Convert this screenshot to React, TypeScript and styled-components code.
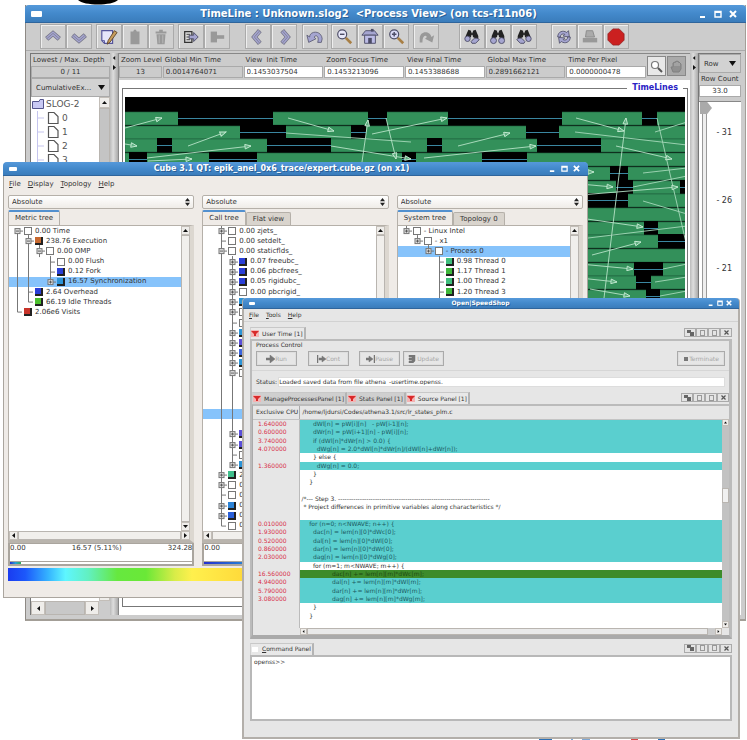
import React from "react";
import styled, { createGlobalStyle } from "styled-components";

const GlobalStyle = createGlobalStyle`
  * { box-sizing: border-box; }
  body { margin: 0; background: #fff; color: #333; font-family: "DejaVu Sans", sans-serif; }
  button, input, select, textarea { font: inherit; color: inherit; margin: 0; padding: 0; border: 0; border-radius: 0; background: none; }
`;

/* ---------- desktop and window frame ---------- */

const Desktop = styled.main`
  position: relative;
  height: 100vh;
  overflow: hidden;
`;

const TopMark = styled.svg`
  position: absolute;
  top: 0;
  left: 76px;
`;

const BottomMark = styled.svg`
  position: absolute;
  bottom: 0;
  left: 539px;
`;

const WindowFrame = styled.section<{ $left: number; $right: number; $top: number; $face: string }>`
  position: absolute;
  left: ${(p) => p.$left}px;
  right: ${(p) => p.$right}px;
  top: ${(p) => p.$top}px;
  display: flex;
  flex-direction: column;
  background: ${(p) => p.$face};
`;

const TimelineFrame = styled(WindowFrame)`
  min-height: 616px;
  border-right: 1px solid #a39e97;
  border-bottom: 2px solid #a39e97;
  border-left: 1px solid #8d8984;
`;

const CubeFrame = styled(WindowFrame)`
  min-height: 436px;
  border: 1px solid #aaa59e;
  border-top: 0;
  border-radius: 5px 5px 0 0;
`;

const ShopFrame = styled(WindowFrame)`
  min-height: 441px;
  border: 2px solid #b3afaa;
  border-top: 0;
  border-radius: 4px 4px 0 0;
`;

const TitleBar = styled.header<{ $height: number; $font: number }>`
  display: flex;
  align-items: center;
  flex: none;
  height: ${(p) => p.$height}px;
  margin: 0 -1px;
  padding: 0 6px;
  border-radius: 4px 4px 0 0;
  background: linear-gradient(#5599da, #4389cb 50%, #3a7cbb);
  border-bottom: 1px solid #2f659c;
  color: #fff;
  font-size: ${(p) => p.$font}px;
  line-height: 12px;
`;

const WindowTitle = styled.h1`
  flex: 1;
  margin: 0;
  font-size: inherit;
  font-weight: bold;
  text-align: center;
  white-space: pre;
  text-shadow: 1px 1px 0 #2a5f96;
`;

const WindowButton = styled.button<{ $width: number }>`
  display: grid;
  place-items: center;
  width: ${(p) => p.$width}px;
  height: 10px;
`;

const MenuDot = styled.button<{ $width: number }>`
  width: ${(p) => p.$width}px;
  height: ${(p) => Math.round(p.$width / 2)}px;
  border-radius: 1px;
  background: #fff;
`;

function Title({ text, height, font, step, dot }: { text: string; height: number; font: number; step: number; dot: number }) {
  const s = step > 12 ? 8 : step > 10 ? 7 : 6;
  return (
    <TitleBar $height={height} $font={font}>
      <MenuDot $width={dot} aria-label="Window menu" />
      <WindowTitle>{text}</WindowTitle>
      <WindowButton $width={step} aria-label="Minimize">
        <svg width={s} height={s} viewBox="0 0 8 8"><path d="M1 7H6" stroke="#fff" strokeWidth="2" /></svg>
      </WindowButton>
      <WindowButton $width={step} aria-label="Maximize">
        <svg width={s} height={s} viewBox="0 0 8 8"><path d="M1 1.5H7V7H1ZM1 2.4H7" fill="none" stroke="#fff" strokeWidth="1.4" /></svg>
      </WindowButton>
      <WindowButton $width={step} aria-label="Close">
        <svg width={s} height={s} viewBox="0 0 8 8"><path d="M1 1L7 7M7 1L1 7" stroke="#fff" strokeWidth="2" /></svg>
      </WindowButton>
    </TitleBar>
  );
}

const MenuBar = styled.nav<{ $font: number; $height: number; $gap: number }>`
  display: flex;
  flex: none;
  align-items: center;
  gap: ${(p) => p.$gap}px;
  height: ${(p) => p.$height}px;
  padding: 0 5px;
  font-size: ${(p) => p.$font}px;
  line-height: 10px;
`;

function Menu({ items, font, height, gap }: { items: string[]; font: number; height: number; gap: number }) {
  return (
    <MenuBar $font={font} $height={height} $gap={gap}>
      {items.map((m) => (
        <button key={m}><u>{m[0]}</u>{m.slice(1)}</button>
      ))}
    </MenuBar>
  );
}

/* ---------- scroll bars and drop-downs ---------- */

const ScrollTrack = styled.div<{ $vertical?: boolean; $size: number; $track: string }>`
  display: flex;
  flex: none;
  flex-direction: ${(p) => (p.$vertical ? "column" : "row")};
  ${(p) => (p.$vertical ? "width" : "height")}: ${(p) => p.$size}px;
  background: ${(p) => p.$track};
`;

const ScrollArrow = styled.button<{ $size: number }>`
  display: grid;
  place-items: center;
  flex: none;
  width: ${(p) => p.$size}px;
  height: ${(p) => p.$size}px;
  background: #efedea;
  border: 1px solid #c3beb8;
`;

const ScrollThumb = styled.div<{ $grow: number; $face: string }>`
  flex: ${(p) => p.$grow} 1 0;
  background: ${(p) => p.$face};
  border: 1px solid #b9b5b0;
`;

const ScrollSpace = styled.div<{ $grow: number }>`
  flex: ${(p) => p.$grow} 1 0;
`;

const arrowPaths = { up: "M0 4L2.5 1L5 4Z", down: "M0 1L2.5 4L5 1Z", left: "M4 0L1 2.5L4 5Z", right: "M1 0L4 2.5L1 5Z" };

function Arrow({ dir, size = 5 }: { dir: keyof typeof arrowPaths; size?: number }) {
  return <svg width={size} height={size} viewBox="0 0 5 5"><path d={arrowPaths[dir]} fill="#111" /></svg>;
}

function Scroll({ vertical, size, track = "#d6d1ca", face = "#f1efec", from = 0, grow = 1, to = 0 }: {
  vertical?: boolean; size: number; track?: string; face?: string; from?: number; grow?: number; to?: number;
}) {
  return (
    <ScrollTrack $vertical={vertical} $size={size} $track={track}>
      <ScrollArrow $size={size} aria-label="Scroll back"><Arrow dir={vertical ? "up" : "left"} size={size > 8 ? 5 : 3} /></ScrollArrow>
      <ScrollSpace $grow={from} />
      <ScrollThumb $grow={grow} $face={face} />
      <ScrollSpace $grow={to} />
      <ScrollArrow $size={size} aria-label="Scroll forward"><Arrow dir={vertical ? "down" : "right"} size={size > 8 ? 5 : 3} /></ScrollArrow>
    </ScrollTrack>
  );
}

const Select = styled.select`
  flex: 1;
  min-width: 0;
  appearance: none;
  line-height: 10px;
  outline: 0;
`;

const DropBox = styled.div`
  display: flex;
  flex: none;
  align-items: center;
  height: 19px;
  padding: 0 4px;
  border: 1px solid #aaa;
  background: #d2d2d2;
`;

const ComboBox = styled.div`
  display: flex;
  align-items: center;
  height: 14px;
  padding: 0 3px;
  border: 1px solid #b5b0a9;
  border-radius: 2px;
  background: linear-gradient(#fff, #efece8);
`;

function Drop({ label, value }: { label: string; value: string }) {
  return (
    <DropBox>
      <Select aria-label={label}><option>{value}</option></Select>
      <svg width="7" height="5" viewBox="0 0 7 5"><path d="M0 0H7L3.500 5Z" fill="#111" /></svg>
    </DropBox>
  );
}

/* ---------- TimeLine window ---------- */

const Toolbar = styled.div`
  display: flex;
  flex: none;
  align-items: center;
  height: 28px;
  padding-left: 14px;
  background: #ccc;
  border-bottom: 1px solid #aaa;
`;

const ToolGroup = styled.div<{ $before: number }>`
  display: flex;
  flex: none;
  margin-left: ${(p) => p.$before}px;
`;

const ToolButton = styled.button`
  display: grid;
  place-items: center;
  width: 26px;
  height: 25px;
  background: #d0d0d0;
  border: 1px solid #aaa;
  box-shadow: inset 1px 1px 0 #eee;
`;

const P = "#a5a5d0";
const D = "#4c4c66";
const G = "#999";

const binocular = (
  <g>
    <path d="M6 2L9 3L9 10L3 13L3 9ZM14 2L11 3L11 10L17 13L17 9Z" fill="#222" />
    <path d="M9 5H11V8H9Z" fill="#222" />
  </g>
);

/* A thick chevron with a dark rim and two light strands. */
const chevron = (turn: number) => (
  <g transform={`rotate(${turn} 10 10)`} fill="none">
    <path d="M3 12L10 6L17 12" stroke="#777788" strokeWidth="5.500" />
    <path d="M3.500 11.600L10 6L16.500 11.600" stroke={P} strokeWidth="3.800" />
    <path d="M3 12L10 6L17 12" stroke="#7c7c92" strokeWidth=".9" />
  </g>
);

const toolIcons: Record<string, React.ReactNode> = {
  up: chevron(0),
  down: chevron(180),
  edit: <g><path d="M2 3H14V17H5L2 14Z" fill="#e6e6fb" stroke="#55559a" strokeWidth="1.300" /><path d="M16 3L19 5L11 16L8 18L9 14Z" fill="#c79c5c" stroke="#5d4628" /><path d="M2 14H5V17" fill="none" stroke="#55559a" /></g>,
  paste: <path d="M5 4H8L9 2H11L12 4H15V18H5Z" fill={G} />,
  trash: <g fill={G}><path d="M4 4H8V2H12V4H16V6H4Z" /><path d="M5 7H15L14 18H6Z" /><path d="M8 8V17M12 8V17" stroke="#bbb" /></g>,
  exportOn: <g><path d="M3 4H11V16H3Z" fill="#ddd" stroke="#333" strokeWidth="1.400" /><path d="M5 7H9M5 10H8M5 13H9" stroke="#333" /><path d="M8 8H13V5L18 10L13 15V12H8Z" fill={P} stroke={D} /></g>,
  exportOff: <g fill={G}><path d="M3 4H10V16H3Z" /><path d="M9 8H18V12H9Z" /></g>,
  prev: chevron(270),
  next: chevron(90),
  undo: <path d="M4 10C4 3 17 2 18 12L17 16L13 16C15 9 11 7 9 10L11 12L3 16L1 8Z" fill={P} stroke={D} strokeWidth=".8" />,
  redo: <path d="M16 10C15 3 3 2 3 12L3 16H6C6 9 9 7 11 10L9 12L17 16L19 8Z" fill={G} />,
  zoomOut: <g><circle cx="8" cy="7" r="5" fill="#e8e8fa" stroke={D} strokeWidth="1.300" /><path d="M5.500 7H10.500" stroke={D} strokeWidth="1.600" /><path d="M12 11L18 17" stroke="#a87f45" strokeWidth="3" /></g>,
  zoomIn: <g><circle cx="8" cy="7" r="5" fill="#d9d9f5" stroke={D} strokeWidth="1.300" /><path d="M5.500 7H10.500M8 4.500V9.500" stroke={D} strokeWidth="1.600" /><path d="M12 11L18 17" stroke="#a87f45" strokeWidth="3" /></g>,
  home: <g><path d="M1 8L5 3H15L19 8Z" fill={P} stroke={D} /><path d="M4 8H16V17H4Z" fill="#bcbce6" stroke={D} /><path d="M8 11H12V17H8Z" fill={D} /><path d="M11 1H14V4H11Z" fill={D} /></g>,
  findLeft: <g>{binocular}<circle cx="5" cy="12" r="3" fill={P} stroke={D} /><path d="M9 15C12 11 16 10 18 13L14 17L10 17Z" fill={P} stroke={D} /></g>,
  find: <g>{binocular}<circle cx="5" cy="14" r="3.300" fill={P} stroke={D} /><circle cx="14" cy="14" r="3.300" fill={P} stroke={D} /></g>,
  findRight: <g>{binocular}<circle cx="15" cy="12" r="3" fill={P} stroke={D} /><path d="M11 15C8 11 4 10 2 13L6 17L10 17Z" fill={P} stroke={D} /></g>,
  refresh: <g fill={P} stroke={D} strokeWidth=".9"><path d="M3 10C3 4 9 2 13 5L15 3L16 10L9 9L11 7C8 6 6 7 6 10Z" /><path d="M17 10C17 16 11 18 7 15L5 17L4 10.500L11 11L9 13C12 14 14 13 14 10Z" /></g>,
  print: <g fill={G}><path d="M6 3H13L15 10H5Z" fill="#aaa" stroke="#888" /><path d="M2 11H18V16H2Z" /></g>,
  stop: <path d="M6.500 1H13.500L19 6.500V13.500L13.500 19H6.500L1 13.500V6.500Z" fill="#cb2020" stroke="#8f2020" strokeWidth=".8" />,
};

const toolGroups: [number, string[]][] = [
  [0, ["up", "down"]],
  [4, ["edit", "paste", "trash"]],
  [4, ["exportOn", "exportOff"]],
  [15, ["prev", "next"]],
  [5, ["undo"]],
  [3, ["zoomOut", "home", "zoomIn"]],
  [4, ["redo"]],
  [20, ["findLeft", "find", "findRight"]],
  [14, ["refresh", "print", "stop"]],
];

const TimelineBody = styled.div`
  display: flex;
  flex: 1;
  padding: 2px 4px 4px;
  background: #ccc;
  font-size: 7px;
  line-height: 10px;
`;

const LegendPane = styled.aside`
  display: flex;
  flex-direction: column;
  width: 80px;
  flex: none;
  border-left: 1px solid #777;
  border-top: 1px solid #777;
`;

const Label = styled.label`
  height: 12px;
  padding-left: 2px;
  line-height: 13px;
  white-space: pre;
`;

const ReadOut = styled.input<{ $white?: boolean; $center?: boolean }>`
  width: 100%;
  height: 12px;
  padding: 0 2px;
  border: 1px solid #aaa;
  background: ${(p) => (p.$white ? "#fff" : "#ccc")};
  text-align: ${(p) => (p.$center ? "center" : "left")};
`;

const LegendScroll = styled.div`
  display: flex;
  flex: 1;
`;

const LegendTree = styled.ul`
  flex: 1;
  min-width: 0;
  margin: 0;
  padding: 0;
  list-style: none;
  background: #fff;
  font-size: 9px;
  line-height: 14px;
  color: #555;
`;

const LegendItem = styled.li<{ $child?: boolean }>`
  display: flex;
  align-items: center;
  gap: 2px;
  height: 14px;
  padding-left: ${(p) => (p.$child ? 5 : 1)}px;
`;

const LegendFoot = styled.div`
  padding-right: 11px;
`;

const Divider = styled.div`
  display: flex;
  flex: none;
  flex-direction: column;
  align-items: center;
  gap: 5px;
  width: 8px;
  padding-top: 3px;
  background: linear-gradient(90deg, #bbb, #ddd 40%, #aaa);
`;

const CenterPane = styled.div`
  display: flex;
  flex: 1;
  min-width: 0;
  flex-direction: column;
  border-top: 1px solid #888;
  border-left: 1px solid #888;
`;

const FieldRow = styled.div`
  display: flex;
  flex: none;
  gap: 1px;
  height: 26px;
  padding-right: 4px;
`;

const Field = styled.div<{ $grow: number }>`
  display: flex;
  flex: ${(p) => p.$grow} 1 0;
  min-width: 0;
  flex-direction: column;
`;

const ModeButton = styled.button<{ $on?: boolean }>`
  display: grid;
  place-items: center;
  flex: none;
  width: 19px;
  height: 20px;
  margin-top: 2px;
  border: 1px solid #888;
  background: ${(p) => (p.$on ? "#e8e8e8" : "#aaa")};
`;

const CanvasPane = styled.div`
  display: flex;
  flex: 1;
  flex-direction: column;
  padding: 3px 2px 8px 3px;
  background: #fff;
`;

const CanvasFrame = styled.fieldset`
  display: flex;
  flex: 1;
  min-width: 0;
  margin: 0;
  padding: 4px 2px 2px;
  border: 1px solid #777;
`;

const CanvasLegend = styled.legend`
  margin-left: auto;
  margin-right: 2px;
  padding: 0 5px;
  color: #2a22c4;
  font-size: 8px;
  font-weight: bold;
  line-height: 10px;
`;

const Chart = styled.svg`
  flex: 1;
  width: 100%;
  height: 480px;
  background: #000;
`;

const RowPane = styled.aside`
  display: flex;
  flex: none;
  flex-direction: column;
  width: 43px;
  border-top: 1px solid #777;
  border-left: 1px solid #777;
`;

const SliderArea = styled.div`
  display: flex;
  flex: 1;
  margin-top: 4px;
  border-top: 1px solid #888;
  background: #fff;
  font-size: 8px;
  line-height: 10px;
`;

const RowSlider = styled.input`
  appearance: none;
  flex: none;
  width: 14px;
  writing-mode: vertical-lr;
  background: linear-gradient(90deg, #fff 3px, #999 3px 4px, #eee 4px 7px, #999 7px 8px, #fff 8px);

  &::-webkit-slider-thumb {
    appearance: none;
    width: 12px;
    height: 12px;
    background: #aaa;
    clip-path: polygon(0 0, 60% 0, 100% 50%, 60% 100%, 0 100%);
  }
`;

const Ticks = styled.ol`
  display: flex;
  flex: 1;
  flex-direction: column;
  gap: 58px;
  margin: 0;
  padding: 26px 9px 0 0;
  list-style: none;
  text-align: right;
`;

/* Idle spans of each process row. */
const gaps: [number, number][][] = [
  [[53, 148], [243, 262], [323, 437], [517, 532]],
  [[115, 161], [226, 241], [401, 434]],
  [[32, 47], [142, 206], [302, 317], [412, 476]],
  [[4, 22], [84, 132], [277, 291], [357, 402]],
  [[485, 503]],
  [[491, 508], [555, 562]],
  [[400, 503]],
  [],
  [[519, 533]],
  [[533, 562]],
  [],
  [[509, 538]],
  [[511, 526]],
  [[521, 535]],
];

const arrows: [number, number, number, number][] = [
  [0, 31, 37, 21], [63, 49, 101, 35], [0, 47, 12, 49], [22, 61, 126, 49], [23, 64, 67, 62],
  [163, 21, 209, 34], [237, 65, 243, 23], [247, 37, 322, 21], [206, 49, 286, 62],
  [261, 21, 271, 62], [333, 49, 385, 36], [299, 61, 411, 49], [451, 21, 499, 34], [491, 49, 547, 62],
  [479, 201, 501, 21], [455, 75, 469, 75], [455, 87, 488, 90], [455, 98, 553, 90],
  [455, 121, 518, 130], [467, 158, 516, 145], [455, 167, 508, 172], [455, 181, 492, 185], [465, 192, 505, 199],
];

const streaks: [number, number, number, number][] = [
  [161, 36, 286, 45], [450, 35, 562, 48], [532, 21, 562, 150], [530, 35, 562, 25], [508, 90, 562, 79], [518, 76, 562, 71],
  [518, 104, 562, 117], [455, 142, 562, 129], [538, 172, 562, 167], [530, 185, 562, 180], [535, 199, 562, 194],
];

function TimelineChart() {
  const rowTop = (i: number) => 15 + Math.round(i * 13.7);
  return (
    <Chart viewBox="0 0 560 480" preserveAspectRatio="xMinYMin slice" role="img" aria-label="Process timelines">
      <defs>
        <marker id="head" viewBox="0 0 8 6" refX="7" refY="3" markerWidth="8" markerHeight="6" markerUnits="userSpaceOnUse" orient="auto">
          <path d="M1 .7L7 3L1 5.300Z" fill="#5fae80" stroke="#c5ead2" strokeWidth=".9" />
        </marker>
      </defs>
      {gaps.map((row, i) => (
        <g key={i}>
          <rect x="0" y={rowTop(i)} width="564" height="13" fill="#33905a" stroke="#20603c" strokeWidth=".6" />
          {row.map(([a, b]) => (
            <g key={a}>
              <rect x={a} y={rowTop(i) - 1} width={b - a} height="15" fill="#000" />
              <path d={`M${a} ${rowTop(i) + 6.5}H${b}`} stroke="#3a86a0" strokeWidth="1" />
            </g>
          ))}
        </g>
      ))}
      {streaks.map(([a, b, c, d], i) => <path key={i} d={`M${a} ${b}L${c} ${d}`} stroke="#a5d8b9" strokeWidth=".9" />)}
      {arrows.map(([a, b, c, d], i) => <path key={i} d={`M${a} ${b}L${c} ${d}`} stroke="#b5e2c6" strokeWidth=".9" markerEnd="url(#head)" />)}
    </Chart>
  );
}

const timeFields: [string, string, number, boolean][] = [
  ["Zoom Level", "13", 43, false],
  ["Global Min Time", "0.0014764071", 80, false],
  ["View  Init Time", "0.1453037504", 80, true],
  ["Zoom Focus Time", "0.1453213096", 80, true],
  ["View Final Time", "0.1453388688", 80, true],
  ["Global Max Time", "0.2891662121", 80, false],
  ["Time Per Pixel", "0.0000000478", 80, true],
];

function TimelineWindow() {
  return (
    <TimelineFrame $left={25} $right={1} $top={5} $face="#dcd8d2">
      <Title text="TimeLine : Unknown.slog2  <Process View> (on tcs-f11n06)" height={18} font={10} step={15} dot={11} />
      <Toolbar>
        {toolGroups.map(([before, names], i) => (
          <ToolGroup key={i} $before={before}>
            {names.map((n) => (
              <ToolButton key={n} aria-label={n}>
                <svg width="18" height="18" viewBox="0 0 20 20">{toolIcons[n]}</svg>
              </ToolButton>
            ))}
          </ToolGroup>
        ))}
      </Toolbar>
      <TimelineBody>
        <LegendPane>
          <Label htmlFor="depth">Lowest / Max. Depth</Label>
          <ReadOut id="depth" $center readOnly defaultValue="0 / 11" />
          <Drop label="Preview mode" value="CumulativeEx..." />
          <LegendScroll>
            <LegendTree>
              <LegendItem>
                <svg width="12" height="10" viewBox="0 0 12 10"><path d="M.5 2.500H7L8 .5H11.500V9.500H.5Z" fill="#c9c9f3" stroke="#55558c" /></svg>
                SLOG-2
              </LegendItem>
              {["0", "1", "2", "3"].map((n) => (
                <LegendItem key={n} $child>
                  <svg width="24" height="14" viewBox="0 0 24 14"><path d="M1.500 0V14M1.500 7H8" stroke="#c5c5ee" fill="none" /><path d="M12.500 1.500H18L22 5.500V12.500H12.500Z" fill="#fff" stroke="#555" strokeWidth="1.200" /></svg>
                  {n}
                </LegendItem>
              ))}
            </LegendTree>
            <Scroll vertical size={11} track="#ccc" face="#c4c4c4" grow={3} to={1} />
          </LegendScroll>
          <LegendFoot><Scroll size={14} track="#ddd" face="#c8c8c8" /></LegendFoot>
        </LegendPane>
        <Divider><Arrow dir="left" size={4} /><Arrow dir="right" size={5} /></Divider>
        <CenterPane>
          <FieldRow>
            {timeFields.map(([label, value, grow, white]) => (
              <Field key={label} $grow={grow}>
                <Label htmlFor={label}>{label}</Label>
                <ReadOut id={label} $center={grow < 50} $white={white} readOnly defaultValue={value} />
              </Field>
            ))}
            <ModeButton $on aria-label="Zoom mode">
              <svg width="13" height="13" viewBox="0 0 13 13"><circle cx="5" cy="5" r="3.500" fill="#fff" stroke="#777" strokeWidth="1.200" /><path d="M8 8L12 12" stroke="#555" strokeWidth="2" /></svg>
            </ModeButton>
            <ModeButton aria-label="Pan mode">
              <svg width="13" height="13" viewBox="0 0 13 13"><path d="M3 12L1 7L3 7V3L5 2L7 1L9 2L11 4V9L9 12Z" fill="#909090" stroke="#808080" /><path d="M5 3V6M7 2V6M9 3V6" stroke="#b5b5b5" /></svg>
            </ModeButton>
          </FieldRow>
          <CanvasPane>
            <CanvasFrame>
              <CanvasLegend>TimeLines</CanvasLegend>
              <TimelineChart />
            </CanvasFrame>
          </CanvasPane>
        </CenterPane>
        <Divider><Arrow dir="left" size={4} /><Arrow dir="right" size={5} /></Divider>
        <RowPane>
          <Drop label="Row mode" value="Row" />
          <Label htmlFor="rows">Row Count</Label>
          <ReadOut id="rows" $white $center readOnly defaultValue="33.0" />
          <SliderArea>
            <RowSlider type="range" aria-label="Row position" min="0" max="33" defaultValue="0" />
            <Ticks><li>- 31</li><li>- 26</li><li>- 21</li></Ticks>
          </SliderArea>
        </RowPane>
      </TimelineBody>
    </TimelineFrame>
  );
}

/* ---------- Cube window ---------- */

const CubeColumns = styled.div`
  display: flex;
  gap: 8px;
  padding: 4px 4px 0;
`;

const CubeColumn = styled.div`
  display: flex;
  flex: 1 1 0;
  min-width: 0;
  flex-direction: column;
  font-size: 7px;
  line-height: 9px;
`;

const TabStrip = styled.div`
  display: flex;
  align-items: flex-end;
  height: 16px;
`;

const CubeTab = styled.button<{ $active?: boolean }>`
  height: ${(p) => (p.$active ? 15 : 13)}px;
  padding: 0 6px;
  border: 1px solid #b5b0a9;
  border-top: ${(p) => (p.$active ? "2px solid #5290cf" : "1px solid #b5b0a9")};
  border-bottom: 0;
  border-radius: 2px 2px 0 0;
  background: ${(p) => (p.$active ? "#efebe7" : "#d9d4cd")};
`;

const TreeFrame = styled.div`
  border: 1px solid #b5b0a9;
  border-right: 4px solid #dcd7d0;
  border-bottom: 3px solid #b9b4ad;
  background: #efebe7;
`;

const TreeArea = styled.div`
  display: flex;
  height: 305px;
`;

const Tree = styled.ul<{ $indent: number }>`
  display: grid;
  flex: 1;
  min-width: 0;
  grid-template-rows: repeat(30, 1fr);
  margin: 0;
  padding: 0;
  overflow: hidden;
  list-style: none;
  background: #fff;
  --indent: ${(p) => p.$indent}px;
`;

const TreeRow = styled.li<{ $selected?: boolean }>`
  display: flex;
  align-items: center;
  min-height: 0;
  padding-left: var(--indent);
  background: ${(p) => (p.$selected ? "#86c3fb" : "transparent")};
  white-space: pre;
`;

const GuideCell = styled.svg`
  flex: none;
  width: 11px;
  height: 100%;
  overflow: visible;
`;

const Swatch = styled.span<{ $color?: string }>`
  flex: none;
  width: 8px;
  height: 8px;
  margin: 0 3px 0 1px;
  border: 1px solid ${(p) => (p.$color ? "#222" : "#777")};
  border-width: ${(p) => (p.$color ? "0 2px 2px 0" : "1px")};
  background: ${(p) => p.$color || "#fff"};
`;

/* Guide marks: "|" through line, " " blank, "+" and "-" expanders, "t" tee, "l" last branch,
   "o" open expander with no line above it, "e" closed expander with no line below it. */
function Guide({ mark }: { mark: string }) {
  const lines: Record<string, string> = {
    "|": "M5.500 -1V11", "+": "M5.500 -1V11M5 5H11", "-": "M5.500 -1V11M5 5H11", o: "M5.500 5V11M5 5H11",
    t: "M5.500 -1V11M5 5H10", l: "M5.500 -1V5H10", e: "M5.500 -1V5M5 5H11", " ": "",
  };
  const box = "+-oe".includes(mark);
  return (
    <GuideCell viewBox="0 0 11 10">
      <path d={lines[mark]} fill="none" stroke="#777" strokeWidth="1" />
      {box && <rect x="3" y="2.500" width="5" height="5" fill="#ddd" stroke="#777" />}
      {box && <path d={mark === "+" || mark === "e" ? "M4 5H7M5.500 3.500V6.500" : "M4 5H7"} stroke="#444" strokeWidth=".8" />}
    </GuideCell>
  );
}

type TreeNode = [guides: string, text: string, color?: string, selected?: boolean];

const metricTree: TreeNode[] = [
  ["o", "0.00 Time"],
  ["|-", "238.76 Execution", "#c8692f"],
  ["||-", "0.00 OMP"],
  ["|| t", "0.00 Flush"],
  ["|| t", "0.12 Fork", "#2a3fd8"],
  ["|| e", "16.57 Synchronization", "#2c93d6", true],
  ["|t", "2.64 Overhead", "#2a3fd8"],
  ["|l", "66.19 Idle Threads", "#4cc02e"],
  ["l", "2.06e6 Visits", "#c8342a"],
];

const callTree: TreeNode[] = [
  ["+", "0.00 zjets_"], ["t", "0.00 setdelt_"], ["-", "0.00 staticflds_"],
  ["|+", "0.07 freeubc_", "#2a3fd8"], ["|+", "0.06 pbcfrees_", "#2a3fd8"], ["|+", "0.05 rigidubc_", "#2a3fd8"],
  ["|+", "0.00 pbcrigid_"], ["|+", "", "#2c93d6"], ["|+", ""], ["|t", ""], ["|+", "", "#2c93d6"],
  ["|+", "", "#5a4fd8"], ["|+", "", "#3a64dd"], ["|+", "", "#2c93d6"], ["|-", ""],
  ["||", ""], ["||", ""], ["||", ""], ["||", "", undefined, true], ["||", ""],
  ["|+", "", "#5a4fd8"], ["|+", "", "#5a4fd8"], ["|t", ""], ["|e", "", "#2c93d6"],
  ["+", "2", "#3fbf8c"], ["+", "0"], ["t", "0"], ["+", "0", "#2c83d6"], ["+", "0", "#2a5fd8"], ["l", "0"],
];

const systemTree: TreeNode[] = [
  ["e", "- Linux Intel"], [" e", "- x1"], ["  e", "- Process 0", undefined, true],
  ["   t", "0.98 Thread 0", "#3fbf7c"], ["   t", "1.17 Thread 1", "#3fb83c"], ["   t", "1.00 Thread 2", "#3fbf7c"], ["   t", "1.20 Thread 3", "#3fb83c"],
];

const ValueBox = styled.div`
  display: flex;
  flex-direction: column;
  height: 23px;
  border: 2px solid #aaa59e;
  border-top-width: 1px;
  background: #fff;
`;

const ValueTexts = styled.div`
  display: flex;
  flex: 1;
  justify-content: space-between;
`;

const ScaleRule = styled.div`
  border-top: 1px solid #aaa59e;
`;

const MiniScale = styled.div<{ $part: number }>`
  width: ${(p) => p.$part}%;
  height: 2px;
  background: linear-gradient(90deg, #2430d0, #28a0d8, #2faa50);
`;

const ColorScale = styled.div`
  height: 13px;
  margin: 2px 4px 0;
  background: linear-gradient(90deg, #1a3cf0 0%, #1c58fb 3%, #35b4ff 7%, #5ef6ff 10%, #62f0c0 14%, #66e83f 19%, #6ae837 24%, #d8ec48 29%, #fff04d 32%, #ffdc3c 40%, #f0602c 80%, #e03020 100%);
`;

function Column({ tabs, nodes, indent, middle, end, part }: {
  tabs: string[]; nodes: TreeNode[]; indent: number; middle: string; end: string; part: number;
}) {
  return (
    <CubeColumn>
      <ComboBox>
        <Select aria-label={`${tabs[0]} values`}><option>Absolute</option></Select>
        <svg width="5" height="8" viewBox="0 0 5 8"><path d="M0 3.300L2.500 0L5 3.300ZM0 4.700L2.500 8L5 4.700Z" fill="#222" /></svg>
      </ComboBox>
      <TabStrip>{tabs.map((t, i) => <CubeTab key={t} $active={i === 0}>{t}</CubeTab>)}</TabStrip>
      <TreeFrame>
        <TreeArea>
          <Tree $indent={indent}>
            {nodes.map(([guides, text, color, selected], i) => (
              <TreeRow key={i} $selected={selected}>
                {guides.split("").map((g, k) => <Guide key={k} mark={g} />)}
                {!guides.endsWith("|") && <Swatch $color={color} />}
                {text}
              </TreeRow>
            ))}
          </Tree>
          <Scroll vertical size={9} />
        </TreeArea>
        <Scroll size={9} />
      </TreeFrame>
      <ValueBox>
        <ValueTexts><span>0.00</span><span>{middle}</span><span>{end}</span></ValueTexts>
        <ScaleRule><MiniScale $part={part} /></ScaleRule>
      </ValueBox>
    </CubeColumn>
  );
}

function CubeWindow() {
  return (
    <CubeFrame $left={3} $right={159} $top={162} $face="#efebe7">
      <Title text="Cube 3.1 QT: epik_anel_0x6_trace/expert.cube.gz (on x1)" height={14} font={8} step={12} dot={8} />
      <Menu items={["File", "Display", "Topology", "Help"]} font={7} height={15} gap={7} />
      <CubeColumns>
        <Column tabs={["Metric tree"]} nodes={metricTree} indent={3} middle="16.57 (5.11%)" end="324.28" part={6} />
        <Column tabs={["Call tree", "Flat view"]} nodes={callTree} indent={13} middle="" end="" part={60} />
        <Column tabs={["System tree", "Topology 0"]} nodes={systemTree} indent={3} middle="" end="" part={60} />
      </CubeColumns>
      <ColorScale />
    </CubeFrame>
  );
}

/* ---------- Open|SpeedShop window ---------- */

const ShopBody = styled.div`
  display: flex;
  flex: 1;
  flex-direction: column;
  padding: 5px 6px 0;
  border-top: 1px solid #d2d2d2;
  font-size: 6px;
  line-height: 8px;
`;

const PanelHead = styled.div`
  display: flex;
  align-items: flex-end;
  height: 12px;
`;

const PanelTab = styled.button<{ $active?: boolean }>`
  display: flex;
  align-items: center;
  gap: 3px;
  height: 12px;
  padding: 0 1px 0 0;
  border-top: 1px solid #c8c8c8;
  border-right: 2px solid #b4b4b4;
  border-left: 1px solid #d0d0d0;
  background: ${(p) => (p.$active ? "#e8e8e8" : "#cfcfcf")};
`;

const CornerButtons = styled.div`
  display: flex;
  margin: 0 0 2px auto;
`;

const CornerButton = styled.button`
  display: grid;
  place-items: center;
  width: 12px;
  height: 9px;
  border: 1px solid #aaa;
  background: #e4e4e4;
`;

function Corner() {
  return (
    <CornerButtons>
      <CornerButton aria-label="Split"><svg width="7" height="6" viewBox="0 0 7 6"><path d="M0 0H4V3H0ZM3 2H7V6H3Z" fill="#666" /></svg></CornerButton>
      <CornerButton aria-label="Dock left"><svg width="5" height="6" viewBox="0 0 5 6"><rect x=".5" y=".5" width="4" height="5" fill="none" stroke="#999" /></svg></CornerButton>
      <CornerButton aria-label="Dock right"><svg width="5" height="6" viewBox="0 0 5 6"><rect x=".5" y=".5" width="4" height="5" fill="none" stroke="#999" /></svg></CornerButton>
      <CornerButton aria-label="Close panel"><svg width="5" height="5" viewBox="0 0 5 5"><path d="M.5 .5L4.500 4.500M4.500 .5L.5 4.500" stroke="#555" strokeWidth="1.200" /></svg></CornerButton>
    </CornerButtons>
  );
}

const Flag = () => (
  <svg width="8" height="7" viewBox="0 0 8 7"><path d="M0 0H8V7H0Z" fill="#f3b4b4" /><path d="M0 1H8L5 4V6H3V4Z" fill="#d82a2a" /></svg>
);

const OuterPanel = styled.div`
  border: 2px solid #bbb;
  border-right-width: 3px;
  border-bottom: 4px solid #aaa;
`;

const ProcessBox = styled.section`
  padding: 0 4px 4px;
  border-bottom: 1px solid #d6d6d6;
`;

const ButtonRow = styled.div`
  display: flex;
  align-items: center;
  gap: 3px;
  margin-top: 2px;
`;

const ActionButton = styled.button<{ $after?: number; $push?: boolean; $wide?: boolean }>`
  display: flex;
  align-items: center;
  justify-content: center;
  width: ${(p) => (p.$wide ? 48 : 41)}px;
  height: 15px;
  margin-right: ${(p) => p.$after || 0}px;
  margin-left: ${(p) => (p.$push ? "auto" : 0)};
  border: 1px solid #aaa;
  box-shadow: inset 0 0 0 1px #dedede;
  color: #a6a6a6;
`;

const StatusRow = styled.div`
  display: flex;
  align-items: center;
  gap: 1px;
  height: 21px;
  padding: 0 4px;
`;

const StatusInput = styled.input`
  flex: 1;
  height: 10px;
  border: 1px solid #ddd;
  background: #fff;
`;

const SourceGrid = styled.div`
  display: grid;
  grid-template-columns: 1fr 7px;
  border-top: 2px solid #bbb;
  border-left: 1px solid #aaa;
`;

const SourceTable = styled.table`
  width: 100%;
  border-collapse: collapse;
  table-layout: fixed;
`;

const SourceHeader = styled.th<{ $width?: number }>`
  width: ${(p) => (p.$width ? p.$width + "px" : "auto")};
  height: 13px;
  padding: 0 3px;
  overflow: hidden;
  border-right: ${(p) => (p.$width ? "1px solid #aaa" : "0")};
  border-bottom: 1px solid #c4c4c4;
  font-weight: normal;
  text-align: left;
  white-space: nowrap;
`;

const tones = { hot: "#5acfcf", peak: "#3d8b2a", plain: "#fff" };

const SourceRow = styled.tr<{ $tall?: boolean }>`
  height: ${(p) => (p.$tall ? 9 : 8)}px;
`;

const CostCell = styled.td`
  padding: 0 0 0 5px;
  border-right: 1px solid #bbb;
  color: #d8304a;
  line-height: 8px;
`;

const CodeCell = styled.td<{ $tone: keyof typeof tones }>`
  padding: 0 0 0 2px;
  overflow: hidden;
  background: ${(p) => tones[p.$tone]};
  color: ${(p) => (p.$tone === "peak" ? "#1d4a12" : p.$tone === "hot" ? "#1b5a5f" : "#333")};
  line-height: 8px;
  white-space: pre;
`;

const SideScroll = styled.div`
  display: flex;
  margin-top: 13px;
`;

const FootBar = styled.div`
  margin-left: 47px;
`;

const CommandHead = styled(PanelHead)`
  margin-top: 4px;
`;

const CommandText = styled.textarea`
  display: block;
  width: 100%;
  height: 66px;
  padding: 1px 2px;
  border: 2px solid #b8b8b8;
  background: #fff;
  resize: none;
`;

type Line = [cost: string, code: string, tone: keyof typeof tones];

const source: Line[] = [
  ["1.640000", "      dWl[n] = pW[i][n]   - pW[i-1][n];", "hot"],
  ["0.600000", "      dWr[n] = pW[i+1][n] - pW[i][n];", "hot"],
  ["3.740000", "      if (dWl[n]*dWr[n] > 0.0) {", "hot"],
  ["4.070000", "        dWg[n] = 2.0*dWl[n]*dWr[n]/(dWl[n]+dWr[n]);", "hot"],
  ["", "      } else {", "plain"],
  ["1.360000", "        dWg[n] = 0.0;", "hot"],
  ["", "      }", "plain"],
  ["", "    }", "plain"],
  ["", "", "plain"],
  ["", "/*--- Step 3. ----------------------------------------------------------------------", "plain"],
  ["", " * Project differences in primitive variables along characteristics */", "plain"],
  ["", "", "plain"],
  ["0.010000", "    for (n=0; n<NWAVE; n++) {", "hot"],
  ["1.930000", "      dac[n] = lem[n][0]*dWc[0];", "hot"],
  ["0.520000", "      dal[n] = lem[n][0]*dWl[0];", "hot"],
  ["0.860000", "      dar[n] = lem[n][0]*dWr[0];", "hot"],
  ["2.030000", "      dag[n] = lem[n][0]*dWg[0];", "hot"],
  ["", "      for (m=1; m<NWAVE; m++) {", "plain"],
  ["16.560000", "                dac[n] += lem[n][m]*dWc[m];", "peak"],
  ["4.940000", "                dal[n] += lem[n][m]*dWl[m];", "hot"],
  ["5.790000", "                dar[n] += lem[n][m]*dWr[m];", "hot"],
  ["3.080000", "                dag[n] += lem[n][m]*dWg[m];", "hot"],
  ["", "      }", "plain"],
  ["", "    }", "plain"],
  ["", "", "plain"],
];

const smallArrow = (d: string) => (
  <svg width="9" height="8" viewBox="0 0 9 8"><path d={d} fill="#777" stroke="#777" strokeWidth=".5" /></svg>
);

function ShopWindow() {
  return (
    <ShopFrame $left={242} $right={7} $top={298} $face="#e6e6e6">
      <Title text="Open|SpeedShop" height={11} font={6} step={9} dot={6} />
      <Menu items={["File", "Tools", "Help"]} font={6} height={12} gap={7} />
      <ShopBody>
        <PanelHead><PanelTab $active><Flag />User Time [1]</PanelTab><Corner /></PanelHead>
        <OuterPanel>
          <ProcessBox>
            Process Control
            <ButtonRow>
              <ActionButton $after={8} disabled>{smallArrow("M0 3H4V0L9 4L4 8V5H0Z")}Run</ActionButton>
              <ActionButton $after={7} disabled>{smallArrow("M0 0H1V8H0ZM2 3H5V1L9 4L5 7V5H2Z")}Cont</ActionButton>
              <ActionButton disabled>{smallArrow("M0 3H3V1L7 4L3 7V5H0ZM8 0H9V8H8Z")}Pause</ActionButton>
              <ActionButton disabled>{smallArrow("M1 0H7V6L5 8H1V6H4V5H1V3H4V2H1Z")}Update</ActionButton>
              <ActionButton $push $wide disabled>
                <svg width="6" height="6" viewBox="0 0 6 6"><path d="M1 1H5V5H1Z" fill="#777" /></svg>Terminate
              </ActionButton>
            </ButtonRow>
          </ProcessBox>
          <StatusRow>
            <label htmlFor="status">Status:</label>
            <StatusInput id="status" readOnly defaultValue="Loaded saved data from file athena_-usertime.openss." />
          </StatusRow>
          <PanelHead>
            <PanelTab><Flag />ManageProcessesPanel [1]</PanelTab>
            <PanelTab><Flag />Stats Panel [1]</PanelTab>
            <PanelTab $active><Flag />Source Panel [1]</PanelTab>
            <Corner />
          </PanelHead>
          <SourceGrid>
            <SourceTable>
              <thead>
                <tr><SourceHeader $width={46}>Exclusive CPU</SourceHeader><SourceHeader>/home/ljdursi/Codes/athena3.1/src/lr_states_plm.c</SourceHeader></tr>
              </thead>
              <tbody>
                {source.map(([cost, code, tone], i) => (
                  <SourceRow key={i} $tall={i % 3 === 1}><CostCell>{cost}</CostCell><CodeCell $tone={tone}>{code}</CodeCell></SourceRow>
                ))}
              </tbody>
            </SourceTable>
            <SideScroll><Scroll vertical size={7} track="#c2c2c2" face="#f0f0f0" from={62} grow={14} to={118} /></SideScroll>
            <FootBar><Scroll size={7} track="#ccc" face="#e9e9e9" grow={60} to={1} /></FootBar>
          </SourceGrid>
        </OuterPanel>
        <CommandHead>
          <PanelTab $active><svg width="8" height="7" viewBox="0 0 8 7"><path d="M1 1H7V6H1Z" fill="#fff" /></svg><span><u>C</u>ommand Panel</span></PanelTab>
          <Corner />
        </CommandHead>
        <CommandText aria-label="Command Panel" defaultValue="openss>>" />
      </ShopBody>
    </ShopFrame>
  );
}

export default function App() {
  return (
    <Desktop>
      <GlobalStyle />
      <TopMark width="44" height="5" viewBox="0 0 44 5"><path d="M2 0H42C36 6 8 6 2 0Z" fill="#000" /></TopMark>
      <TimelineWindow />
      <CubeWindow />
      <ShopWindow />
      <BottomMark width="128" height="1" viewBox="0 0 128 1">
        <path d="M0 0H13V1H0ZM119 0H126V1H119Z" fill="#2a6fb5" />
        <path d="M32 0H34V1H32ZM43 0H51V1H43Z" fill="#7da7d4" />
        <path d="M92 0H99V1H92Z" fill="#d8484a" />
      </BottomMark>
    </Desktop>
  );
}
